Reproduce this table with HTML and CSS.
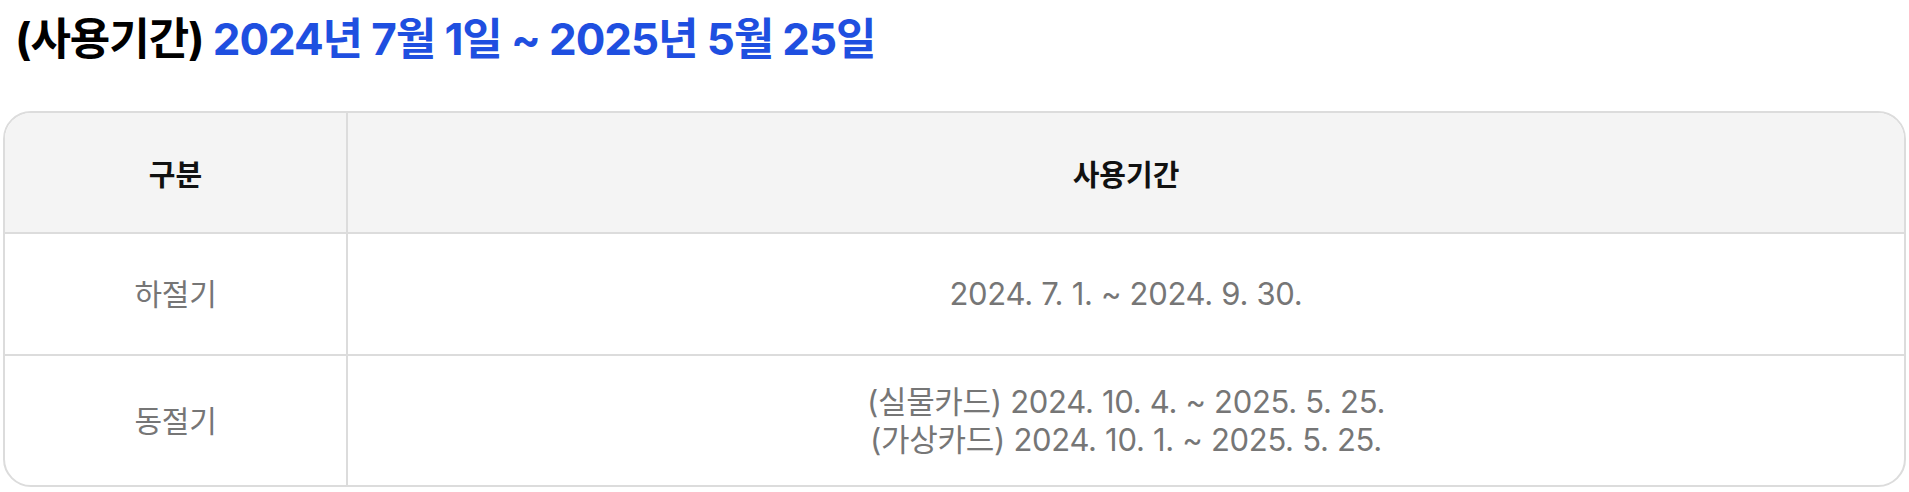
FILE: index.html
```html
<!DOCTYPE html>
<html lang="ko">
  <head>
    <meta charset="UTF-8">
    <title>사용기간 안내</title>
    <link rel="stylesheet" href="styles.css">
  </head>
  <body>
    <div class="page">
      <!-- 사용기간 제목 -->
      <h2 class="period-title">(사용기간) <span class="period-range">2024년 7월 1일 ~ 2025년 5월 25일</span></h2>

      <!-- 구분별 사용기간 표 -->
      <table class="period-table">
        <thead>
          <tr>
            <th class="col-type">구분</th>
            <th>사용기간</th>
          </tr>
        </thead>
        <tbody>
          <tr class="row-summer">
            <td class="col-type">하절기</td>
            <td>2024. 7. 1. ~ 2024. 9. 30.</td>
          </tr>
          <tr class="row-winter">
            <td class="col-type">동절기</td>
            <td>
              (실물카드) 2024. 10. 4. ~ 2025. 5. 25.<br>
              (가상카드) 2024. 10. 1. ~ 2025. 5. 25.
            </td>
          </tr>
        </tbody>
      </table>
    </div>
  </body>
</html>
```

FILE: styles.css
```css
/* 기본 */
html,body{margin:0;padding:0;background:#fff;font-family:Inter,'Noto Sans CJK KR',sans-serif;color:#111;}
.page{padding:0 3px;}

/* 제목 */
.period-title{margin:0;padding:13px 0 0 12px;height:111px;box-sizing:border-box;font-size:44px;font-weight:700;letter-spacing:-1.1px;line-height:52px;color:#000;}
.period-range{color:#1f4fe0;}

/* 표 */
.period-table{width:100%;border-collapse:separate;border-spacing:0;border:2px solid #dcdcdc;border-radius:28px;overflow:hidden;}
.period-table th,.period-table td{text-align:center;vertical-align:middle;border-bottom:2px solid #dcdcdc;}
.period-table tr:last-child td{border-bottom:none;}
.period-table .col-type{width:341px;border-right:2px solid #dcdcdc;}
.period-table th{background:#f4f4f4;height:119px;padding:0;font-size:29px;font-weight:600;color:#111;}
.period-table td{padding:0;font-size:31px;color:#767676;letter-spacing:-0.3px;line-height:38px;}
.period-table td.col-type{font-size:30px;}
.row-summer td{height:120px;}
.row-winter td{height:129px;}
```
